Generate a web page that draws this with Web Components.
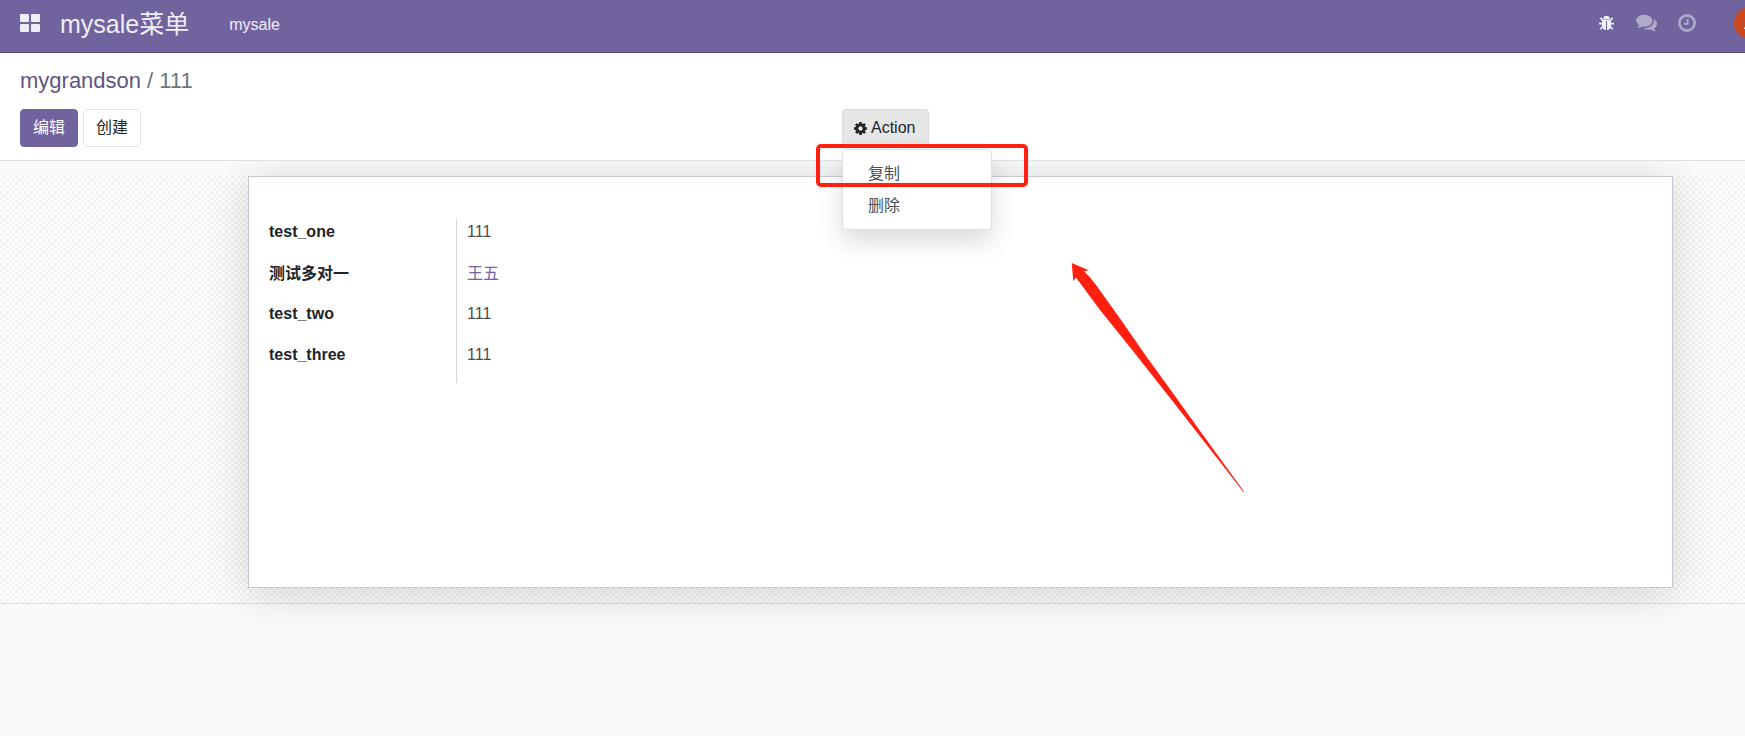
<!DOCTYPE html>
<html lang="zh-CN">
<head>
<meta charset="utf-8">
<title>mygrandson / 111</title>
<style>
html, body { height: 100%; }
body { margin: 0; background: #f8fafb; color: #212529; font: 16px/24px "Liberation Sans", "Noto Sans CJK SC", sans-serif; overflow: hidden; }
</style>
</head>
<body>
<sale-app></sale-app>

<template id="t-app">
<style>
:host { display: block; position: relative; min-height: 100%; overflow: hidden; }
sale-arrow { position: absolute; left: 1071px; top: 262px; }
</style>
<sale-navbar brand="mysale菜单" section="mysale"></sale-navbar>
<sale-panel></sale-panel>
<sale-sheet>
  <sale-fields></sale-fields>
</sale-sheet>
<sale-arrow></sale-arrow>
</template>

<template id="t-navbar">
<style>
:host { display: flex; align-items: center; height: 52px; padding-left: 20px; background: #71639e; border-bottom: 1px solid #5a4f7f; color: #f0eef5; overflow: hidden; }
a { color: inherit; text-decoration: none; }
button { display: flex; padding: 0; border: 0; background: none; color: inherit; }
nav { display: flex; align-items: center; flex: 1; padding-bottom: 4px; }
.apps { padding-bottom: 2px; }
.brand { font-size: 25px; line-height: 48px; margin: 0 40px 0 20px; }
.section { padding-top: 2px; }
.tray { display: flex; align-items: center; padding-bottom: 6px; }
.bug { margin-right: 21px; }
.dim { opacity: .5; margin-right: 21px; }
.last { margin-right: 38px; }
.avatar { width: 11px; height: 32px; overflow: hidden; }
.avatar svg { flex: none; }
svg { display: block; fill: currentColor; }
</style>
<nav>
  <button class="apps" aria-label="Apps"><svg width="20" height="18" viewBox="0 0 20 18"><rect width="9" height="8" rx="1"/><rect x="11" width="9" height="8" rx="1"/><rect y="10" width="9" height="8" rx="1"/><rect x="11" y="10" width="9" height="8" rx="1"/></svg></button>
  <a class="brand" href="#"></a>
  <a class="section" href="#"></a>
</nav>
<div class="tray">
  <button class="bug" aria-label="Debug"><svg width="16" height="16" viewBox="0 0 16 16"><path d="M4.300 4a3.200 3.200 0 0 1 6.400 0z"/><path d="M3 4.600h9v5.800c0 2.700-1.700 4.400-4 4.600V6H7v9c-2.300-.2-4-1.900-4-4.600z"/><path d="M1.300 2.800l2.600 2.600M13.700 2.800l-2.600 2.600M0 8.700H3.500M11.500 8.700H15M3.900 11.300L1.300 14.200M11.100 11.300l2.600 2.900" fill="none" stroke="currentColor" stroke-width="1.700"/></svg></button>
  <button class="dim" aria-label="Messages"><svg width="21" height="18" viewBox="0 64 1792 1536"><path d="M1408 640q0 139-94 257t-256.500 186.500T704 1152q-86 0-176-16-124 88-278 128-36 9-86 16h-3q-11 0-20.500-8t-11.500-21q-1-3-1-6.500t.5-6.500 2-6l2.500-5 3.500-5.500 4-5 4.500-5 4-4.500q5-6 23-25t26-29.500 22.500-29 25-38.500 20.500-44Q142 870 71 790T0 640q0-139 94-257t256.500-186.500T704 128t353.500 68.500T1314 383t94 257zm384 256q0 120-71 224.500T1526 1297q10 24 20.500 44t25 38.500 22.500 29 26 29.500 23 25q1 1 4 4.500t4.500 5 4 5 3.500 5.500l2.500 5 2 6 .5 6.500-1 6.500q-3 14-13 22t-22 7q-50-7-86-16-154-40-278-128-90 16-176 16-271 0-472-132 58 4 88 4 161 0 309-45t264-129q125-92 192-212t67-254q0-77-23-152 129 71 204 178t75 230z"/></svg></button>
  <button class="dim last" aria-label="Activities"><svg width="18" height="18" viewBox="0 0 18 18"><circle cx="9" cy="9" r="7.600" fill="none" stroke="currentColor" stroke-width="2.700"/><path d="M9.600 4.700v5.200H5.800" fill="none" stroke="currentColor" stroke-width="1.700"/></svg></button>
  <button class="avatar" aria-label="User"><svg width="32" height="32" viewBox="0 0 32 32"><circle cx="16" cy="16" r="16" fill="#c9481f"/><path d="M10 22l5-12h2l5 12h-2.500l-1-3h-5l-1 3z" fill="#fff"/></svg></button>
</div>
</template>

<template id="t-panel">
<style>
:host { display: block; padding: 12px 20px 13px; background: #fff; border-bottom: 1px solid #dee2e6; }
ol { display: flex; gap: 6px; margin: 0 0 12px; padding: 0; list-style: none; font-size: 22px; line-height: 32px; color: #6c757d; }
a { color: #5f5484; text-decoration: none; }
.bar { display: grid; grid-template-columns: 822px 1fr; align-items: start; }
.buttons { display: flex; gap: 5px; }
button { box-sizing: border-box; height: 38px; padding: 0 12px; font: inherit; border: 1px solid #dee2e6; border-radius: 4px; background: #fff; color: #212529; }
button.primary { background: #71639e; border-color: #71639e; color: #fff; }
</style>
<ol><li><a href="#">mygrandson</a></li><li>/</li><li>111</li></ol>
<div class="bar">
  <div class="buttons"><button class="primary">编辑</button><button>创建</button></div>
  <sale-action></sale-action>
</div>
</template>

<template id="t-action">
<style>
:host { display: block; position: relative; z-index: 2; justify-self: start; }
.toggle { display: flex; align-items: center; gap: 4px; box-sizing: border-box; width: 87px; height: 38px; padding: 0 11px; font: inherit; border: 1px solid #dadada; border-radius: 4px 4px 0 0; background: #e6e6e6; color: #212529; }
.toggle svg { flex: none; }
.menu { position: absolute; left: 0; top: 40px; box-sizing: border-box; width: 150px; padding: 8px 0 7px; background: #fff; border: 1px solid #dee2e6; border-radius: 4px; box-shadow: 0 12px 24px rgba(0,0,0,.14); }
a { display: block; padding: 4px 25px; color: #495057; text-decoration: none; }
.mark { position: absolute; left: -26px; top: 35px; box-sizing: border-box; width: 212px; height: 43px; border: 4px solid #ff2010; border-radius: 5px; pointer-events: none; }
</style>
<button class="toggle"><svg width="13" height="13" viewBox="0 0 1536 1536" fill="#212529"><path d="M1024 768q0-106-75-181t-181-75-181 75-75 181 75 181 181 75 181-75 75-181zm512-109v222q0 12-8 23t-20 13l-185 28q-19 54-39 91 35 50 107 138 10 12 10 25t-9 23q-27 37-99 108t-94 71q-12 0-26-9l-138-108q-44 23-91 38-16 136-29 186-7 28-36 28H657q-14 0-24.500-8.500T621 1506l-28-184q-49-16-90-37l-141 107q-10 9-25 9-14 0-25-11-126-114-165-168-7-10-7-23 0-12 8-23 15-21 51-66.500t54-70.500q-27-50-41-99L29 913q-13-2-21-12.500T0 877V655q0-12 8-23t19-13l186-28q14-46 39-92-40-57-107-138-10-12-10-24 0-10 9-23 26-36 98.500-107.500T337 135q13 0 26 10l138 107q44-23 91-38 16-136 29-186 7-28 36-28h222q14 0 24.500 8.500T915 30l28 184q49 16 90 37l142-107q9-9 24-9 13 0 25 10 129 119 165 170 7 8 7 22 0 12-8 23-15 21-51 66.500t-54 70.500q26 50 41 98l183 28q13 2 21 12.500t8 23.500z"/></svg><span>Action</span></button>
<div class="menu"><a href="#">复制</a><a href="#">删除</a></div>
<div class="mark"></div>
</template>

<template id="t-sheet">
<style>
:host { display: block; margin-top: 15px; padding: 0 72px 15px 248px; border-bottom: 1px solid #dadcde;
  background: conic-gradient(#f2f2f2 25%, #fff 0 50%, #f2f2f2 0 75%, #fff 0) 0 0 / 6px 6px; }
.sheet { box-sizing: border-box; min-height: 412px; padding: 42px 20px 24px 20px; background: #fff; border: 1px solid #c8c8d3; box-shadow: 0 6px 40px rgba(0,0,0,.16); clip-path: inset(-15px -72px -60px -100px); }
</style>
<div class="sheet"><slot></slot></div>
</template>

<template id="t-fields">
<style>
:host { display: block; }
table { border-collapse: collapse; }
th, td { padding: 1px 0 16px; text-align: left; vertical-align: top; line-height: 24px; }
.cjk th, .cjk td { padding: 2px 0 15px; }
th { width: 187px; font-weight: 700; color: #212529; }
td, .cjk td { padding-left: 10px; border-left: 1px solid #d8d8d8; color: #4c4c4c; }
a { color: #71639e; text-decoration: none; }
</style>
<table><tbody>
<tr><th scope="row">test_one</th><td>111</td></tr>
<tr class="cjk"><th scope="row">测试多对一</th><td><a href="#">王五</a></td></tr>
<tr><th scope="row">test_two</th><td>111</td></tr>
<tr><th scope="row">test_three</th><td>111</td></tr>
</tbody></table>
</template>

<template id="t-arrow">
<style>:host { display: block; pointer-events: none; } svg { display: block; }</style>
<svg width="174" height="231" viewBox="0 0 174 231"><path d="M.700.900L17.800 8.200 13 9.300Q20 16 25 23L49 56.500 75 94 104 134 132 173 173 229.500H172L128 173 97.500 134 59 85.300 29 48 5 15.500 2.300 19z" fill="#ff2010"/></svg>
</template>

<script>
const define = (name, setup) => customElements.define('sale-' + name, class extends HTMLElement {
  constructor() {
    super();
    this.attachShadow({ mode: 'open' }).append(document.getElementById('t-' + name).content.cloneNode(true));
  }
  connectedCallback() { if (setup) setup(this, this.shadowRoot); }
});
define('navbar', (el, root) => {
  root.querySelector('.brand').textContent = el.getAttribute('brand');
  root.querySelector('.section').textContent = el.getAttribute('section');
});
['action', 'panel', 'fields', 'sheet', 'arrow', 'app'].forEach(name => define(name));
</script>
</body>
</html>
